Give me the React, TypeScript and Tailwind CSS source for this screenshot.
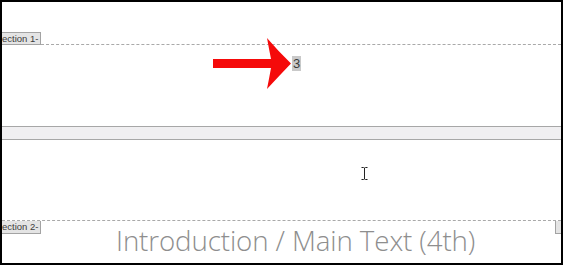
const SectionTab = ({ label, className = "" }: { label: string; className?: string }) => (
  <div
    className={`h-[13px] flex items-center bg-[#e4e4e4] border border-[#a3a3a3] border-l-0 pr-[2px] text-[9.5px] leading-none text-[#3c3c3c] font-['Liberation_Sans',sans-serif] whitespace-nowrap ${className}`}
  >
    {label}
  </div>
);

const RedArrow = () => (
  <svg width="80" height="54" viewBox="0 0 80 54" className="block">
    <path
      d="M0 21 L58 21 Q56 11 54 0 Q66 14 78 25.5 Q66 38 54 51 Q56 41 58 30 L0 30 Z"
      fill="#f50a0a"
    />
  </svg>
);

const IBeam = () => (
  <svg width="7" height="13" viewBox="0 0 7 13" className="block">
    <path d="M0.5 0.5 H2.5 M4.5 0.5 H6.5 M3.5 1 V12 M0.5 12.5 H2.5 M4.5 12.5 H6.5 M2.5 0.5 L3.5 1 L4.5 0.5 M2.5 12.5 L3.5 12 L4.5 12.5" stroke="#222" strokeWidth="1" fill="none" />
  </svg>
);

export default function App() {
  return (
    <div className="w-[563px] h-[265px] border-2 border-black bg-white flex flex-col overflow-hidden font-['Open_Sans',sans-serif]">
      {/* header region with section 1 tab */}
      <div className="h-[30px] shrink-0" />
      <div className="flex items-end shrink-0">
        <SectionTab label="ection 1-" />
        <div className="flex-1 border-b border-dashed border-[#a9a9a9]" />
      </div>

      {/* page body with annotation */}
      <div className="relative h-[81px] shrink-0">
        <div className="absolute left-[211px] top-[-7px]">
          <RedArrow />
        </div>
        <div className="absolute left-[290px] top-[11px] h-[15px] px-[1px] bg-[#c9c9c9] text-[13px] leading-[15px] text-[#3a3a3a] font-['Liberation_Sans',sans-serif]">
          3
        </div>
      </div>

      {/* page gap band */}
      <div className="h-[14px] shrink-0 bg-[#f0eff1] border-y border-[#a7a7a7]" />

      {/* next page */}
      <div className="h-[80px] shrink-0 flex items-start pl-[359px] pt-[27px]">
        <IBeam />
      </div>

      <div className="border-t border-dashed border-[#a9a9a9] flex-1 grid grid-cols-[38px_1fr_6px] items-start">
        <div>
          <SectionTab label="ection 2-" className="border-t-0 w-fit" />
        </div>
        <div className="pl-[76px] mt-[3px] text-[27.7px] leading-[32px] font-light text-[#8e8e8e] whitespace-nowrap tracking-[-0.1px]">
          Introduction / Main Text (4th)
        </div>
        <div className="w-[6px] h-[13px] bg-[#e4e4e4] border border-[#a3a3a3] border-t-0 border-r-0" />
      </div>
    </div>
  );
}
